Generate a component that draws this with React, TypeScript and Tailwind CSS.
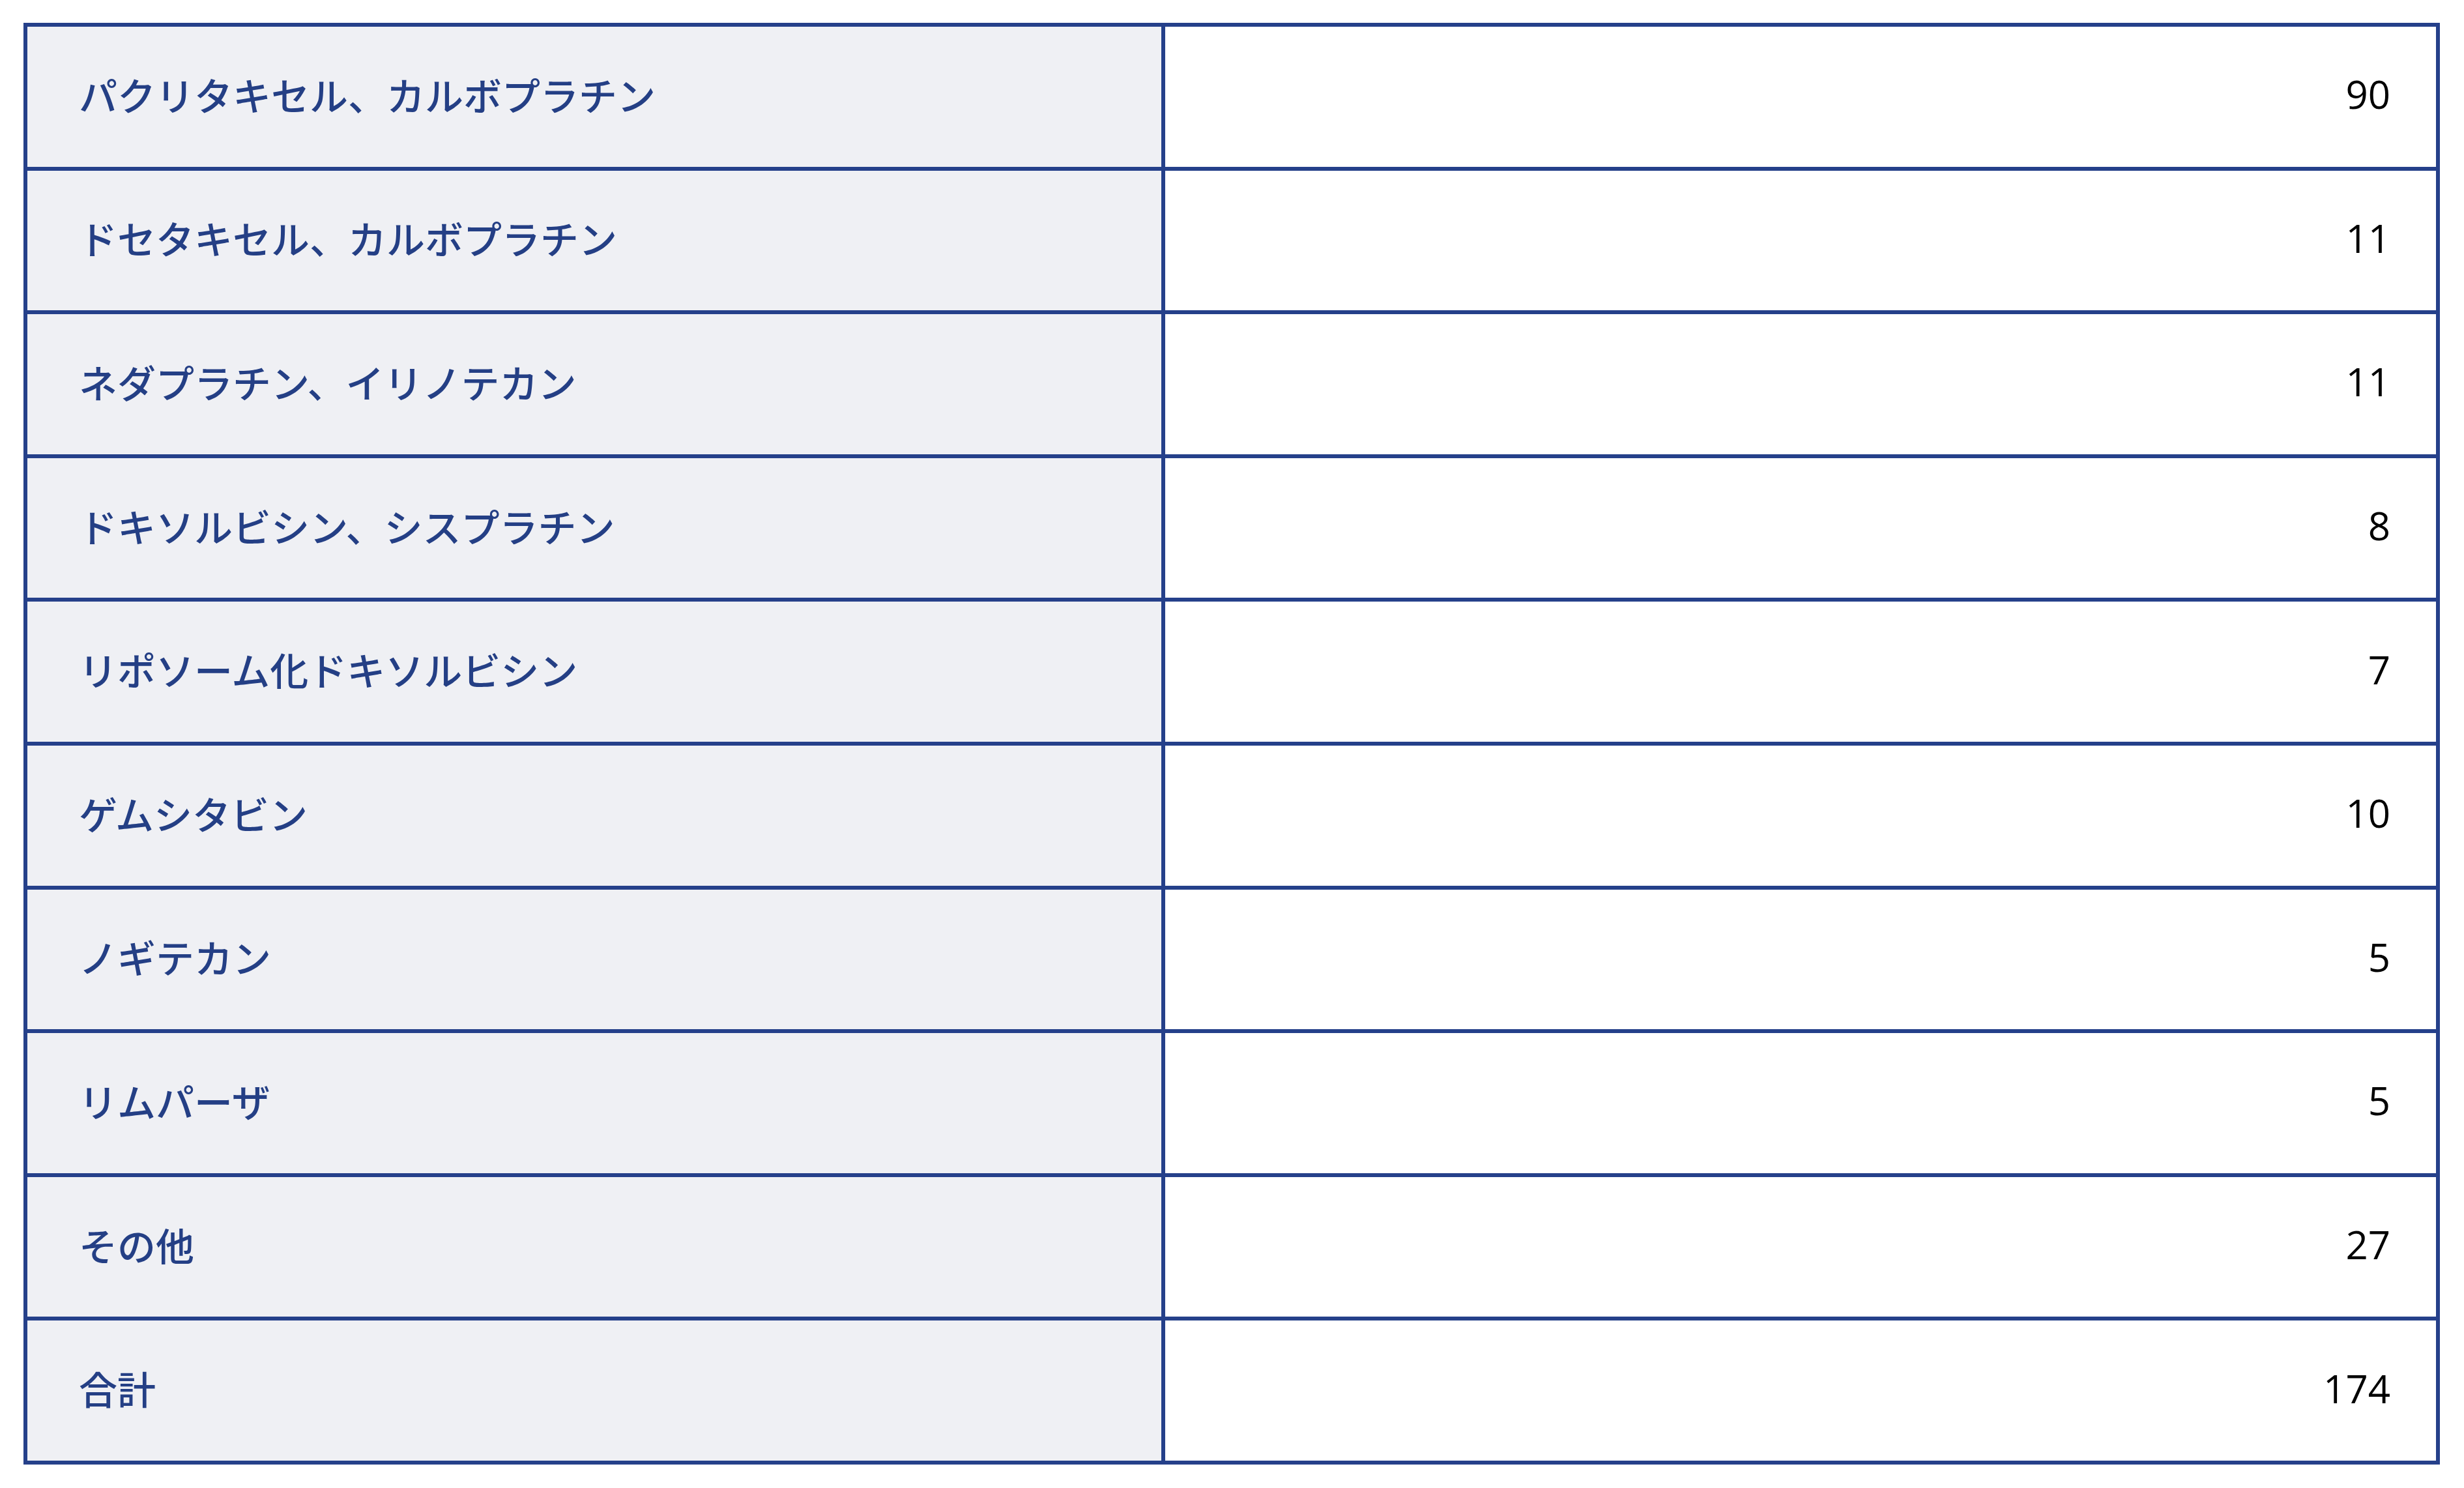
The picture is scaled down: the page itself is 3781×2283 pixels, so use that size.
import React from "react";

const rows: [string, string][] = [
  ["パクリタキセル、カルボプラチン", "90"],
  ["ドセタキセル、カルボプラチン", "11"],
  ["ネダプラチン、イリノテカン", "11"],
  ["ドキソルビシン、シスプラチン", "8"],
  ["リポソーム化ドキソルビシン", "7"],
  ["ゲムシタビン", "10"],
  ["ノギテカン", "5"],
  ["リムパーザ", "5"],
  ["その他", "27"],
  ["合計", "174"],
];

export default function App() {
  return (
    <div className="min-h-[2283px] w-[3781px] bg-white pt-[35px] pl-[36px]">
      <div className="w-[3708px] border-[6px] border-[#25408a] flex flex-col">
        {rows.map(([name, value], i) => (
          <div
            key={i}
            className={
              i === 0
                ? "flex h-[214.6px]"
                : "flex h-[220.6px] border-t-[6px] border-[#25408a]"
            }
          >
            <div className="w-[1746px] shrink-0 bg-[#eff0f4] border-r-[6px] border-[#25408a] flex items-center pl-[79px] pb-[8px]">
              <span className="text-[59px] leading-none font-medium text-[#243f85] [font-family:'Noto_Sans_CJK_JP',sans-serif]">
                {name}
              </span>
            </div>
            <div className="flex-1 bg-white flex items-center justify-end pr-[70px] pb-[8px]">
              <span className="text-[60px] leading-none text-black [font-family:'Open_Sans',sans-serif]">
                {value}
              </span>
            </div>
          </div>
        ))}
      </div>
    </div>
  );
}
